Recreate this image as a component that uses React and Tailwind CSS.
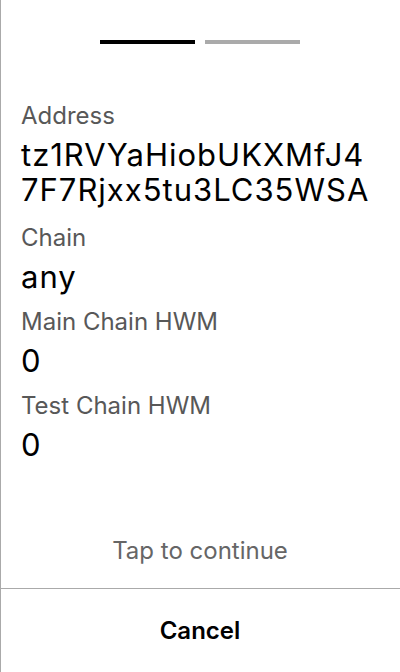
const fields = [
  { label: "Address", value: "tz1RVYaHiobUKXMfJ4 7F7Rjxx5tu3LC35WSA", gap: "mt-0" },
  { label: "Chain", value: "any", gap: "mt-[17px]" },
  { label: "Main Chain HWM", value: "0", gap: "mt-[14px]" },
  { label: "Test Chain HWM", value: "0", gap: "mt-[14px]" },
];

export default function App() {
  return (
    <div className="flex h-[672px] w-[400px] flex-col border-l border-[#aaaaaa] bg-white font-['Inter','Liberation_Sans',sans-serif] text-black">
      <div className="flex justify-center gap-[10px] pt-10 pr-[1px]">
        <div className="h-1 w-[95px] bg-black" />
        <div className="h-1 w-[95px] bg-[#aaaaaa]" />
      </div>

      <div className="mt-[58px] pl-5">
        {fields.map((f) => (
          <div key={f.label} className={f.gap}>
            <div className="text-[24px] leading-[28px] text-[#585858]">{f.label}</div>
            <div className="mt-[7px] text-[31px] leading-[35px] tracking-[1px]">{f.value}</div>
          </div>
        ))}
      </div>

      <div className="flex-1" />

      <div className="pb-[23px] pr-[1px] text-center text-[24px] leading-[28px] text-[#666666]">Tap to continue</div>
      <div className="flex h-[84px] items-center justify-center border-t border-[#aaaaaa] pr-[1px]">
        <span className="text-[24px] leading-[28px] font-semibold">Cancel</span>
      </div>
    </div>
  );
}
